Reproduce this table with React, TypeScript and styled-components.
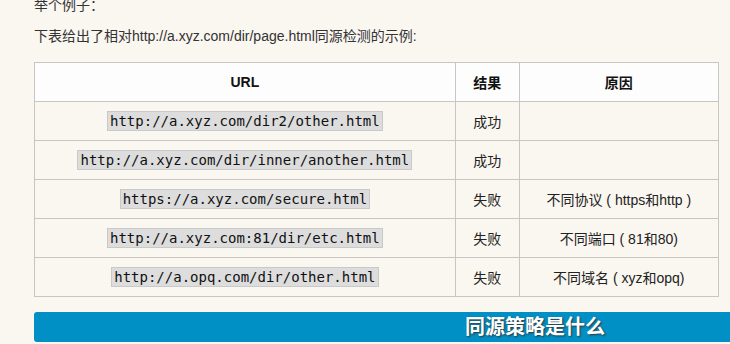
import styled, { createGlobalStyle } from "styled-components";

// ---------------- 样式 ----------------
const GlobalStyle = createGlobalStyle`
  html, body {
    margin: 0;
    padding: 0;
    background: #faf6f0;
    overflow: hidden;
  }
  body {
    font-family: "Liberation Sans", "Noto Sans CJK SC", sans-serif;
    color: #333;
  }
`;

const Article = styled.div`
  padding-left: 34px;
  margin-top: -6px;
`;

const Para = styled.p`
  margin: 0 0 9px;
  font-size: 14px;
  line-height: 22px;
`;

const Table = styled.table`
  margin-top: 15px;
  width: 685px;
  border-collapse: collapse;
  font-size: 14px;
  color: #222;
  th,
  td {
    border: 1px solid #c8c6c3;
    height: 38px;
    padding: 0 8px;
    text-align: center;
  }
  th {
    background: #fdfdfd;
    font-weight: bold;
    color: #111;
  }
`;

const Col = styled.col<{ $w: number }>`
  width: ${(p) => p.$w}px;
`;

const Code = styled.code`
  font-family: "DejaVu Sans Mono", monospace;
  font-size: 14px;
  line-height: 18px;
  background: #dddddd;
  border: 1px solid #c9c9c9;
  padding: 1px 2px;
  color: #111;
`;

const Heading = styled.h2`
  margin: 15px 0 0;
  width: 1002px;
  height: 30px;
  line-height: 30px;
  background: #0190c6;
  border-radius: 3px;
  color: #fff;
  font-size: 20px;
  font-weight: bold;
  text-align: center;
  text-shadow: 1px 1px 2px #333;
`;
// ---------------- 样式 끝 ----------------

const rows = [
  { url: "http://a.xyz.com/dir2/other.html", result: "成功", reason: "" },
  { url: "http://a.xyz.com/dir/inner/another.html", result: "成功", reason: "" },
  { url: "https://a.xyz.com/secure.html", result: "失败", reason: "不同协议 ( https和http )" },
  { url: "http://a.xyz.com:81/dir/etc.html", result: "失败", reason: "不同端口 ( 81和80)" },
  { url: "http://a.opq.com/dir/other.html", result: "失败", reason: "不同域名 ( xyz和opq)" },
];

const App = () => {
  return (
    <>
      <GlobalStyle />
      <Article>
        <Para>举个例子：</Para>
        <Para>下表给出了相对http://a.xyz.com/dir/page.html同源检测的示例:</Para>
        <Table>
          <colgroup>
            <Col $w={421} />
            <Col $w={64} />
            <Col $w={200} />
          </colgroup>
          <thead>
            <tr>
              <th>URL</th>
              <th>结果</th>
              <th>原因</th>
            </tr>
          </thead>
          <tbody>
            {rows.map((r) => (
              <tr key={r.url}>
                <td>
                  <Code>{r.url}</Code>
                </td>
                <td>{r.result}</td>
                <td>{r.reason}</td>
              </tr>
            ))}
          </tbody>
        </Table>
        <Heading>同源策略是什么</Heading>
      </Article>
    </>
  );
};
export default App;
